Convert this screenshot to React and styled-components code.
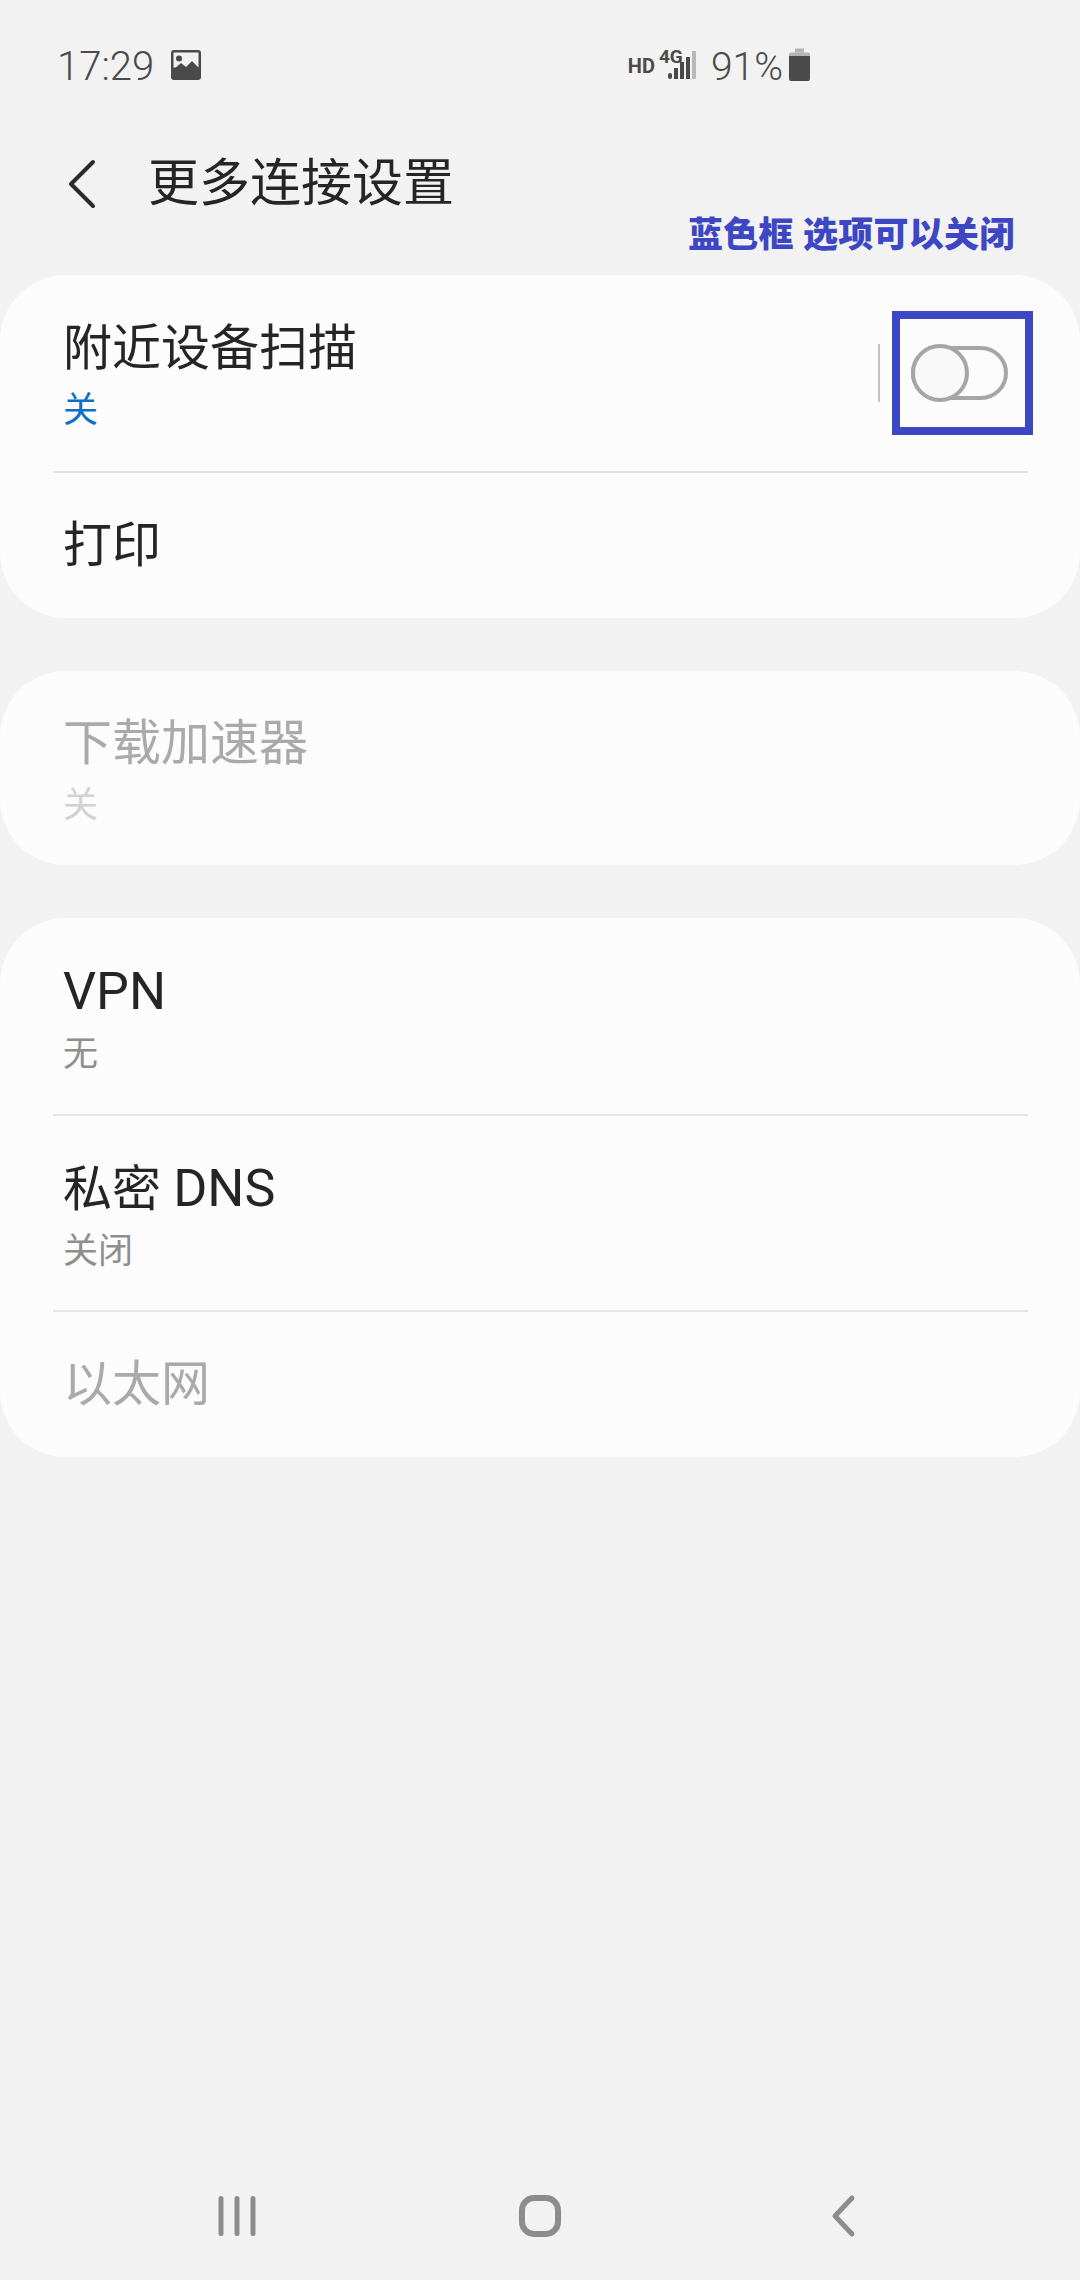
import React from 'react';
import styled, { createGlobalStyle } from 'styled-components';

const GlobalStyle = createGlobalStyle`
  html, body {
    margin: 0;
    padding: 0;
    background: #f2f2f2;
  }
  * {
    box-sizing: border-box;
  }
`;

const FONT = `Roboto, 'Noto Sans CJK SC', sans-serif`;

const Page = styled.div`
  position: relative;
  display: flex;
  flex-direction: column;
  width: 1080px;
  height: 2280px;
  overflow: hidden;
  background: #f2f2f2;
  font-family: ${FONT};
  color: #252525;
`;

const StatusBar = styled.div`
  display: flex;
  align-items: center;
  justify-content: space-between;
  height: 50px;
  margin-top: 40px;
  padding: 0 269px 0 57px;
  color: #4a4a4a;
`;

const StatusGroup = styled.div`
  display: flex;
  align-items: center;
`;

const Clock = styled.span`
  font-size: 40px;
  font-weight: 300;
  margin: 2px 16px 0 0;
`;

const HdLabel = styled.span`
  font-size: 20px;
  font-weight: 700;
  margin-right: 5px;
  margin-top: 2px;
`;

const SignalWrap = styled.div`
  position: relative;
  width: 38px;
  height: 32px;
  margin-right: 13px;
`;

const NetLabel = styled.span`
  position: absolute;
  left: -1px;
  top: -2px;
  font-size: 19px;
  line-height: 19px;
  font-weight: 700;
`;

const Percent = styled.span`
  font-size: 39px;
  font-weight: 300;
  margin: 3px 6px 0 0;
`;

const Header = styled.div`
  display: flex;
  align-items: center;
  height: 185px;
  padding: 2px 0 0 67px;
`;

const Title = styled.h1`
  margin: 0 0 0 49px;
  font-size: 51px;
  font-weight: 400;
  line-height: 60px;
`;

const Note = styled.div`
  position: absolute;
  left: 688px;
  top: 213px;
  font-size: 35px;
  line-height: 46px;
  font-weight: 900;
  letter-spacing: 0.3px;
  color: #3d47c4;
  white-space: pre;
`;

const Cards = styled.div`
  display: flex;
  flex-direction: column;
  gap: 53px;
`;

const Card = styled.section`
  background: #fcfcfc;
  border-radius: 66px;
`;

const Row = styled.div`
  display: flex;
  align-items: center;
  justify-content: space-between;
  height: ${p => p.$height || 145}px;
  padding-left: 63px;
`;

const RowText = styled.div`
  display: flex;
  flex-direction: column;
  padding-top: 7px;
`;

const RowTitle = styled.div`
  font-size: 49px;
  line-height: 64px;
  color: ${p => (p.$disabled ? '#aaaaaa' : '#252525')};
`;

const Latin = styled.span`
  font-size: 52px;
`;

const RowSub = styled.div`
  font-size: 35px;
  line-height: 50px;
  margin-top: 5px;
  color: ${p => p.$color || '#8e8e8e'};
`;

const Divider = styled.div`
  height: 2px;
  margin: 0 52px 0 53px;
  background: #e4e4e4;
`;

const SwitchArea = styled.div`
  display: flex;
  align-items: center;
  margin-right: 47px;
`;

const VerticalRule = styled.div`
  width: 2px;
  height: 58px;
  margin-right: 12px;
  background: #c4c4c4;
`;

const Highlight = styled.div`
  display: flex;
  align-items: center;
  justify-content: center;
  width: 141px;
  height: 124px;
  border: 8px solid #3d47c4;
  padding-right: 7px;
`;

const Track = styled.div`
  position: relative;
  width: 97px;
  height: 54px;
  border: 4px solid #a6a6a6;
  border-radius: 27px;
`;

const Knob = styled.div`
  position: absolute;
  left: -4px;
  top: -6px;
  width: 58px;
  height: 58px;
  border: 4px solid #a6a6a6;
  border-radius: 50%;
  background: #f9f9f9;
`;

const NavBar = styled.nav`
  display: grid;
  grid-template-columns: repeat(3, 1fr);
  align-items: center;
  justify-items: center;
  height: 128px;
  margin-top: auto;
  padding: 0 86px;
`;

const PictureIcon = () => (
  <svg width="32" height="32" viewBox="0 0 32 32">
    <rect x="1" y="1" width="30" height="30" rx="3" fill="#4a4a4a" />
    <rect x="3.5" y="3.5" width="25" height="15" fill="#f2f2f2" />
    <circle cx="9" cy="9.5" r="3" fill="#4a4a4a" />
    <path d="M3 21 L11 14 L16 18 L22 12 L29 19 V25 H3 Z" fill="#4a4a4a" />
  </svg>
);

const SignalIcon = () => (
  <svg width="38" height="32" viewBox="0 0 38 32" style={{ display: 'block' }}>
    <rect x="8" y="24" width="4" height="6" rx="2" fill="#4a4a4a" />
    <rect x="14" y="19" width="4" height="11" fill="#4a4a4a" />
    <rect x="20" y="13" width="4" height="17" fill="#4a4a4a" />
    <rect x="26" y="8" width="4" height="22" fill="#4a4a4a" />
    <rect x="32" y="2" width="4" height="28" fill="#b8b8b8" />
  </svg>
);

const BatteryIcon = () => (
  <svg width="22" height="34" viewBox="0 0 22 34">
    <path d="M6 0.5 H15 V4.5 H6 Z" fill="#b4b4b4" />
    <path d="M2 4.5 H19 Q21 4.5 21 6.5 V8 H0 V6.5 Q0 4.5 2 4.5 Z" fill="#b4b4b4" />
    <path d="M0 8 H21 V31 Q21 33 19 33 H2 Q0 33 0 31 Z" fill="#4a4a4a" />
  </svg>
);

const BackIcon = () => (
  <svg width="32" height="50" viewBox="0 0 32 50">
    <path d="M26 3 L4 25 L26 47" fill="none" stroke="#2b2b2b" strokeWidth="4" strokeLinecap="round" strokeLinejoin="round" />
  </svg>
);

const RecentsIcon = () => (
  <svg width="40" height="44" viewBox="0 0 40 44">
    <g stroke="#8c8c8c" strokeWidth="5" strokeLinecap="round">
      <path d="M4 4.5 V39.5" />
      <path d="M20 4.5 V39.5" />
      <path d="M36 4.5 V39.5" />
    </g>
  </svg>
);

const HomeIcon = () => (
  <svg width="44" height="44" viewBox="0 0 44 44">
    <rect x="4" y="4" width="36" height="36" rx="12" fill="none" stroke="#8c8c8c" strokeWidth="6" />
  </svg>
);

const NavBackIcon = () => (
  <svg width="26" height="44" viewBox="0 0 26 44">
    <path d="M22 4 L5 22 L22 40" fill="none" stroke="#8c8c8c" strokeWidth="5" strokeLinecap="round" strokeLinejoin="round" />
  </svg>
);

const App = () => (
  <Page>
    <GlobalStyle />
    <StatusBar>
      <StatusGroup>
        <Clock>17:29</Clock>
        <PictureIcon />
      </StatusGroup>
      <StatusGroup>
        <HdLabel>HD</HdLabel>
        <SignalWrap>
          <NetLabel>4G</NetLabel>
          <SignalIcon />
        </SignalWrap>
        <Percent>91%</Percent>
        <BatteryIcon />
      </StatusGroup>
    </StatusBar>

    <Header>
      <BackIcon />
      <Title>更多连接设置</Title>
    </Header>
    <Note>蓝色框 选项可以关闭</Note>

    <Cards>
      <Card>
        <Row $height={196}>
          <RowText>
            <RowTitle>附近设备扫描</RowTitle>
            <RowSub $color="#0f6fc6">关</RowSub>
          </RowText>
          <SwitchArea>
            <VerticalRule />
            <Highlight>
              <Track>
                <Knob />
              </Track>
            </Highlight>
          </SwitchArea>
        </Row>
        <Divider />
        <Row>
          <RowTitle>打印</RowTitle>
        </Row>
      </Card>

      <Card>
        <Row $height={194}>
          <RowText>
            <RowTitle $disabled>下载加速器</RowTitle>
            <RowSub $color="#d2d2d2">关</RowSub>
          </RowText>
        </Row>
      </Card>

      <Card>
        <Row $height={196}>
          <RowText>
            <RowTitle><Latin>VPN</Latin></RowTitle>
            <RowSub>无</RowSub>
          </RowText>
        </Row>
        <Divider />
        <Row $height={194}>
          <RowText>
            <RowTitle>私密 <Latin>DNS</Latin></RowTitle>
            <RowSub>关闭</RowSub>
          </RowText>
        </Row>
        <Divider />
        <Row>
          <RowTitle $disabled>以太网</RowTitle>
        </Row>
      </Card>
    </Cards>

    <NavBar>
      <RecentsIcon />
      <HomeIcon />
      <NavBackIcon />
    </NavBar>
  </Page>
);

export default App;
